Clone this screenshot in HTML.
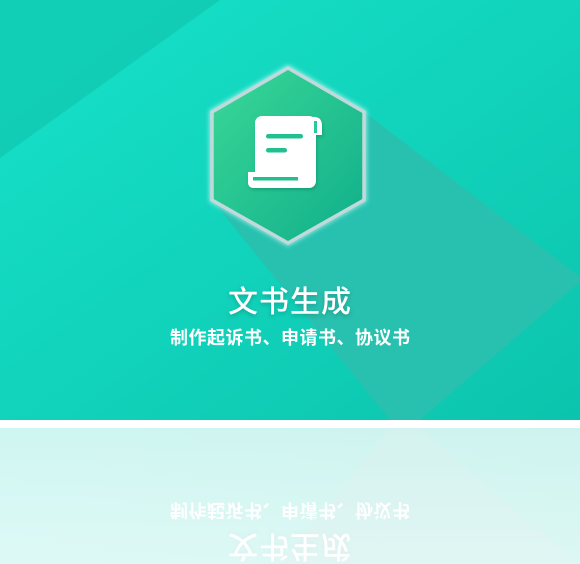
<!DOCTYPE html>
<html><head><meta charset="utf-8"><style>
html,body{margin:0;padding:0;background:#fff;width:580px;height:564px;overflow:hidden;}
body{position:relative;font-family:"Liberation Sans","Noto Sans CJK SC",sans-serif;}
.card{position:absolute;left:0;top:0;width:580px;height:420px;overflow:hidden;}
.refl{position:absolute;left:0;top:428px;width:580px;height:136px;overflow:hidden;}
.refl .card{top:-284px;transform:scaleY(-1);transform-origin:50% 352px;}
.refl .fade{position:absolute;left:0;top:0;width:580px;height:136px;background:linear-gradient(to bottom,rgba(255,255,255,0.8),rgba(255,255,255,0.86));}
.t1{position:absolute;left:0;width:580px;top:277px;text-align:center;color:#fff;font-size:30px;letter-spacing:1px;font-weight:500;text-shadow:0 2px 4px rgba(0,80,70,0.3);}
.t2{position:absolute;left:0;width:580px;top:326px;text-align:center;color:#fff;font-size:18px;letter-spacing:0.5px;font-weight:bold;text-indent:0.5px;line-height:24px;}
</style></head><body>
<div class="card">
<svg width="580" height="420" style="position:absolute;left:0;top:0">
<defs>
<linearGradient id="bg" x1="0" y1="0" x2="1" y2="1"><stop offset="0" stop-color="#17e2ca"/><stop offset="1" stop-color="#0cc4ad"/></linearGradient>
<linearGradient id="hx" x1="0" y1="0" x2="1" y2="1"><stop offset="0" stop-color="#3ad897"/><stop offset="1" stop-color="#10ae8a"/></linearGradient>
<filter id="gl" x="-20%" y="-20%" width="140%" height="140%"><feGaussianBlur stdDeviation="2.5"/></filter>
<filter id="ds" x="-20%" y="-20%" width="140%" height="140%"><feDropShadow dx="1" dy="2" stdDeviation="1.5" flood-color="#0a6a50" flood-opacity="0.35"/></filter>
</defs>
<rect width="580" height="420" fill="url(#bg)"/>
<polygon points="0,0 220,0 0,158" fill="#10c9b2" opacity="0.8"/>
<polygon points="364,112 580,277 580,282 420,420 390,420 212,200" fill="#2bbfae" opacity="0.9"/>
<polygon points="288,68 364,112 364,200 288,243 212,200 212,112" fill="none" stroke="#e0ffff" stroke-width="5" filter="url(#gl)" opacity="0.7"/>
<polygon points="288,68 364,112 364,200 288,243 212,200 212,112" fill="url(#hx)" stroke="#c2d9dc" stroke-width="3.5"/>
<g filter="url(#ds)" fill="#fff">
<rect x="255" y="116" width="61" height="72" rx="7"/>
<path d="M312 117 Q322 116 322 126 L322 135 L315 135 Z"/>
<path d="M248 172 L300 172 L306 188 L254 188 Q248 188 248 182 Z"/>
</g>
<rect x="253" y="177" width="45" height="3.5" fill="#1fbf8e"/>
<rect x="314" y="121" width="3" height="12" fill="#2cc79a"/>
<rect x="266" y="134" width="37" height="4.5" rx="2.2" fill="#22c08f"/>
<rect x="266" y="148" width="21" height="4.5" rx="2.2" fill="#22c08f"/>
</svg>
<div class="t1">文书生成</div>
<div class="t2">制作起诉书、申请书、协议书</div>
</div>
<div class="refl">
<div class="card">
<svg width="580" height="420" style="position:absolute;left:0;top:0">
<defs>
<linearGradient id="bg2" x1="0" y1="0" x2="1" y2="1"><stop offset="0" stop-color="#17e2ca"/><stop offset="1" stop-color="#0cc4ad"/></linearGradient>
</defs>
<rect width="580" height="420" fill="url(#bg2)"/>
<polygon points="364,112 580,277 580,282 420,420 390,420 212,200" fill="#2bbfae" opacity="0.9"/>
</svg>
<div class="t1">文书生成</div>
<div class="t2">制作起诉书、申请书、协议书</div>
</div>
<div class="fade"></div>
</div>
</body></html>
